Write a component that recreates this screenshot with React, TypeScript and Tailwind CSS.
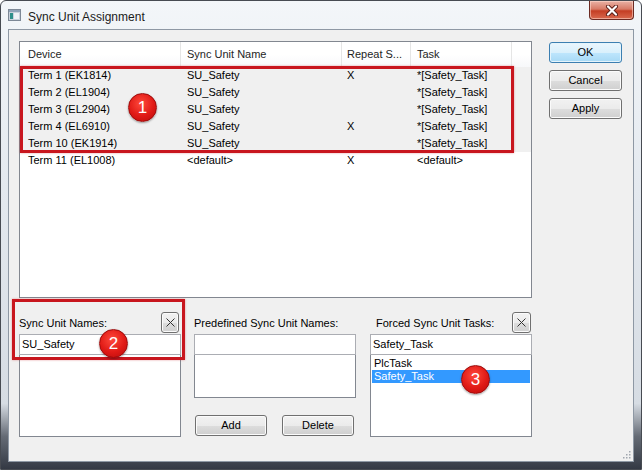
import React from "react";

const btn =
  "flex items-center justify-center border border-[#707070] rounded-[3px] bg-[linear-gradient(to_bottom,#f2f2f2_0%,#ebebeb_50%,#dddddd_51%,#cfcfcf_100%)] shadow-[inset_0_0_0_1px_#fbfbfb] text-[11px] text-black";

const okBtn =
  "flex items-center justify-center border border-[#3c7fb1] rounded-[3px] bg-[linear-gradient(to_bottom,#eaf6fd_0%,#d9f0fc_50%,#bee6fd_51%,#a7d9f5_100%)] shadow-[inset_0_0_0_1px_#e4f4fc] text-[11px] text-black";

const rows = [
  { dev: "Term 1 (EK1814)", su: "SU_Safety", rep: "X", task: "*[Safety_Task]", sel: true },
  { dev: "Term 2 (EL1904)", su: "SU_Safety", rep: "", task: "*[Safety_Task]", sel: true },
  { dev: "Term 3 (EL2904)", su: "SU_Safety", rep: "", task: "*[Safety_Task]", sel: true },
  { dev: "Term 4 (EL6910)", su: "SU_Safety", rep: "X", task: "*[Safety_Task]", sel: true },
  { dev: "Term 10 (EK1914)", su: "SU_Safety", rep: "", task: "*[Safety_Task]", sel: true },
  { dev: "Term 11 (EL1008)", su: "<default>", rep: "X", task: "<default>", sel: false },
];

function Marker({ n, className }: { n: string; className: string }) {
  return (
    <div
      className={
        "absolute w-[29px] h-[29px] rounded-full border border-[#9c0a0a] bg-[radial-gradient(circle_at_45%_35%,#ff4a3c_0%,#e01a16_55%,#b80b0b_100%)] shadow-[0_1px_2px_rgba(0,0,0,0.35)] flex items-center justify-center text-white text-[17px] leading-none " +
        className
      }
    >
      {n}
    </div>
  );
}

function ClearBtn({ className }: { className: string }) {
  return (
    <div className={btn + " h-[21px] " + className}>
      <svg width="9" height="9" viewBox="0 0 9 9">
        <path d="M0.5 0.5L8.5 8.5M8.5 0.5L0.5 8.5" stroke="#333" strokeWidth="1" />
      </svg>
    </div>
  );
}

export default function App() {
  return (
    <div className="w-[642px] h-[470px] flex flex-col border border-[#474b52] rounded-t-[6px] px-[7px] pb-[7px] bg-[linear-gradient(to_bottom,#f3f6f9_0%,#e4e9ef_40%,#d6dce3_86%,#656b75_93%,#343944_100%)] font-['Liberation_Sans',Arial,sans-serif] overflow-hidden">
      {/* title bar */}
      <div className="h-[28px] flex items-start">
        <svg width="13" height="12" viewBox="0 0 13 12" className="mt-[8px]">
          <rect x="0.5" y="0.5" width="12" height="11" fill="#c9d2dc" stroke="#7d8896" />
          <rect x="1" y="1" width="11" height="2" fill="#8fa3b8" />
          <rect x="2" y="4" width="3" height="6" fill="#2e8f8a" />
          <rect x="6" y="4" width="5" height="6" fill="#eef2f6" />
        </svg>
        <span className="ml-[7px] mt-[7px] text-[12px] text-[#1b1b1b]">Sync Unit Assignment</span>
        <div className="ml-auto w-[45px] h-[19px] flex items-center justify-center border border-[#6b2a22] border-t-0 rounded-b-[4px] bg-[linear-gradient(to_bottom,#eab2a5_0%,#d77a66_45%,#c43e24_55%,#d9694e_100%)] shadow-[inset_0_0_0_1px_rgba(255,220,210,0.55)]">
          <svg width="14" height="11" viewBox="0 0 14 11">
            <path d="M3 1.5L11 9.5M11 1.5L3 9.5" stroke="#5a1d16" strokeWidth="4" strokeLinecap="round" />
            <path d="M3 1.5L11 9.5M11 1.5L3 9.5" stroke="#ffffff" strokeWidth="2.2" strokeLinecap="round" />
          </svg>
        </div>
      </div>

      {/* client */}
      <div className="relative flex-1 flex flex-col border border-[#8e98a4] bg-[#f0f0f0] pl-[10px] pt-[11px]">
        <div className="flex">
          {/* list view */}
          <div className="relative w-[513px] h-[257px] border border-[#828790] bg-white text-[11px] text-black">
            <div className="flex h-[25px] bg-[linear-gradient(to_bottom,#ffffff_0%,#ffffff_50%,#f7f8fa_100%)] text-[#1e1e1e]">
              <div className="w-[161px] pl-[8px] flex items-center border-r border-[#e5e5e5]">Device</div>
              <div className="w-[161px] pl-[6px] flex items-center border-r border-[#e5e5e5]">Sync Unit Name</div>
              <div className="w-[69px] pl-[5px] flex items-center border-r border-[#e5e5e5]">Repeat S...</div>
              <div className="w-[101px] pl-[6px] flex items-center border-r border-[#e5e5e5]">Task</div>
              <div className="flex-1" />
            </div>
            {rows.map((r) => (
              <div key={r.dev} className={"flex h-[17px] items-center " + (r.sel ? "bg-[#f0f0f0]" : "")}>
                <div className="w-[161px] pl-[8px]">{r.dev}</div>
                <div className="w-[161px] pl-[6px]">{r.su}</div>
                <div className="w-[69px] pl-[5px]">{r.rep}</div>
                <div className="w-[101px] pl-[6px]">{r.task}</div>
              </div>
            ))}
            <div className="absolute left-0 top-[24px] w-[494px] h-[87px] border-[3px] border-[#c8161e] shadow-[0_0_2px_rgba(200,22,30,0.4)]" />
            <Marker n="1" className="left-[108px] top-[51px]" />
          </div>

          {/* dialog buttons */}
          <div className="ml-[17px] mt-[1px] flex flex-col gap-[7px]">
            <div className={okBtn + " w-[73px] h-[21px]"}>OK</div>
            <div className={btn + " w-[73px] h-[21px]"}>Cancel</div>
            <div className={btn + " w-[73px] h-[21px]"}>Apply</div>
          </div>
        </div>

        {/* bottom panel */}
        <div className="flex mt-[14px] text-[11px] text-black">
          {/* sync unit names */}
          <div className="relative w-[162px] flex flex-col">
            <div className="h-[22px] flex items-start">
              <span className="mt-[3px]">Sync Unit Names:</span>
              <ClearBtn className="ml-auto mr-[2px] w-[18px]" />
            </div>
            <div className="h-[21px] border border-[#abadb3] bg-white flex items-center pl-[2px]">SU_Safety</div>
            <div className="h-[82px] border border-t-0 border-[#828790] bg-white" />
            <div className="absolute left-[-7px] top-[-13px] w-[173px] h-[61px] border-[3px] border-[#c8161e] shadow-[0_0_2px_rgba(200,22,30,0.4)]" />
            <Marker n="2" className="left-[80px] top-[17px]" />
          </div>

          {/* predefined names */}
          <div className="ml-[13px] w-[162px] flex flex-col">
            <div className="h-[22px] flex items-start">
              <span className="mt-[3px]">Predefined Sync Unit Names:</span>
            </div>
            <div className="h-[21px] border border-[#abadb3] bg-white" />
            <div className="h-[43px] border border-t-0 border-[#828790] bg-white" />
            <div className="mt-[17px] flex pl-px pr-[2px] justify-between">
              <div className={btn + " w-[72px] h-[21px]"}>Add</div>
              <div className={btn + " w-[72px] h-[21px]"}>Delete</div>
            </div>
          </div>

          {/* forced tasks */}
          <div className="relative ml-[14px] w-[162px] flex flex-col">
            <div className="h-[22px] flex items-start">
              <span className="mt-[3px] pl-[6px]">Forced Sync Unit Tasks:</span>
              <ClearBtn className="ml-auto mr-px w-[19px]" />
            </div>
            <div className="h-[21px] border border-[#abadb3] bg-white flex items-center pl-[2px]">Safety_Task</div>
            <div className="h-[82px] border border-t-0 border-[#828790] bg-white pt-[2px] px-px">
              <div className="h-[13px] flex items-center pl-[2px] leading-none">PlcTask</div>
              <div className="h-[13px] flex items-center pl-[2px] leading-none bg-[#3399ff] text-white">Safety_Task</div>
            </div>
            <Marker n="3" className="left-[91px] top-[53px]" />
          </div>
        </div>

        {/* size grip */}
        <svg width="10" height="10" viewBox="0 0 10 10" className="absolute right-[2px] bottom-[2px]">
          {[
            [8, 2],
            [5, 5],
            [8, 5],
            [2, 8],
            [5, 8],
            [8, 8],
          ].map(([x, y]) => (
            <rect key={x + "-" + y} x={x} y={y} width="1.5" height="1.5" fill="#a0a6ae" />
          ))}
        </svg>
      </div>
    </div>
  );
}
